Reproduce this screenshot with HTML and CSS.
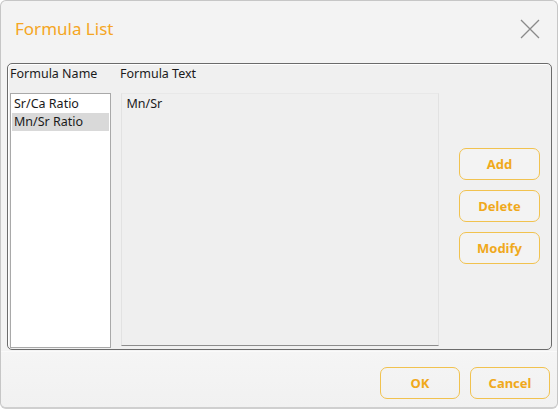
FILE: index.html
```html
<!DOCTYPE html>
<html>
<head>
<meta charset="utf-8">
<link rel="stylesheet" href="styles.css">
</head>
<body>
<div class="window">
  <div class="titlebar">
    <div class="title">Formula List</div>
    <svg class="close" width="20" height="20" viewBox="0 0 20 20"><path d="M1 1 L19 19 M19 1 L1 19" stroke="#8a8a8a" stroke-width="1.3" fill="none"/></svg>
  </div>
  <div class="frame">
    <div class="labels">
      <div class="label name-label">Formula Name</div>
      <div class="label">Formula Text</div>
    </div>
    <div class="body">
      <div class="list">
        <div class="item">Sr/Ca Ratio</div>
        <div class="item selected">Mn/Sr Ratio</div>
      </div>
      <div class="textbox">Mn/Sr</div>
      <div class="actions">
        <button class="btn">Add</button>
        <button class="btn">Delete</button>
        <button class="btn">Modify</button>
      </div>
    </div>
  </div>
  <div class="footer">
    <button class="btn">OK</button>
    <button class="btn">Cancel</button>
  </div>
</div>
</body>
</html>
```
FILE: styles.css
```css
html, body {
  margin: 0;
  padding: 0;
  background: #ffffff;
}
body {
  font-family: "Noto Sans", "Open Sans", sans-serif;
  font-size: 12.5px;
  color: #1a1a1a;
}
.window {
  width: 556px;
  height: 406px;
  border: 1px solid #c6c6c6;
  border-bottom: 2px solid #cfcfcf;
  border-radius: 6px;
  background: #f3f3f3;
  display: flex;
  flex-direction: column;
  box-sizing: content-box;
}
.titlebar {
  height: 62px;
  box-sizing: border-box;
  padding: 16px 17px 0 14px;
  display: flex;
  justify-content: space-between;
  align-items: flex-start;
}
.title {
  font-size: 17px;
  line-height: 24px;
  color: #f5a623;
}
.close {
  margin-top: 2px;
}
.frame {
  margin: 0 5px 0 6px;
  height: 287px;
  box-sizing: border-box;
  border: 1px solid #6b6b6b;
  border-radius: 5px;
  background: #f0f0f0;
  box-shadow: inset 1px 1px 0 #ffffff;
  padding: 0 11px 1px 2px;
  display: flex;
  flex-direction: column;
}
.labels {
  display: flex;
  height: 18px;
  line-height: 18px;
  margin-top: 1px;
}
.name-label {
  width: 110px;
}
.body {
  margin-top: 10px;
  flex: 1;
  display: flex;
}
.list {
  width: 101px;
  box-sizing: border-box;
  border: 1px solid #a9a9a9;
  background: #ffffff;
  padding: 1px;
}
.item {
  height: 18px;
  line-height: 18px;
  padding-left: 2px;
}
.item.selected {
  background: #d9d9d9;
}
.textbox {
  margin-left: 10px;
  width: 320px;
  box-sizing: border-box;
  height: 253px;
  border-left: 1px solid #e2e2e2;
  border-top: 1px solid #e8e8e8;
  border-right: 1px solid #e2e2e2;
  border-bottom: 1px solid #8c8c8c;
  background: #efefef;
  padding: 1px 5px;
  line-height: 18px;
}
.actions {
  margin-left: 20px;
  margin-top: 55px;
  display: flex;
  flex-direction: column;
  gap: 10px;
}
.btn {
  width: 81px;
  height: 32px;
  box-sizing: border-box;
  border: 1px solid #f1c24f;
  border-radius: 7px;
  background: #f3f3f3;
  color: #f0a91c;
  font-family: "Noto Sans", "Open Sans", sans-serif;
  font-weight: bold;
  font-size: 13px;
  padding: 0;
}
.footer {
  flex: 1;
  margin-top: 1px;
  border-top: 1px solid #fafafa;
  background: linear-gradient(#f5f5f5, #f1f1f1);
  border-radius: 0 0 6px 6px;
  display: flex;
  justify-content: flex-end;
  align-items: flex-start;
  gap: 10px;
  padding: 15px 7px 0 0;
}
.footer .btn {
  width: 80px;
  background: transparent;
}
```
